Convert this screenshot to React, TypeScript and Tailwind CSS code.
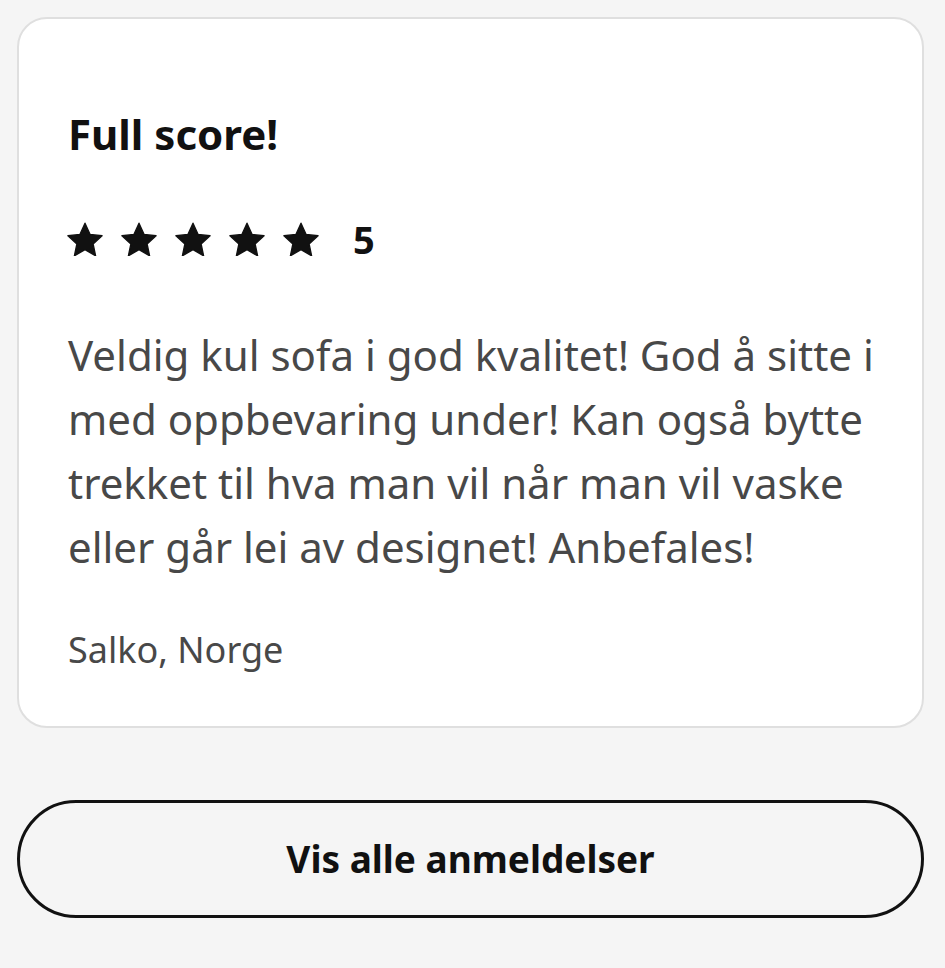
import React from 'react';

const Star: React.FC = () => (
    <svg viewBox="1.2 1.2 21.6 20.5" className="h-[34px] w-[36px]" fill="#111111">
        <path
            d="M12 1.9l3.1 6.8 7.2.8-5.4 4.9 1.5 7.2L12 17.9l-6.4 3.7 1.5-7.2-5.4-4.9 7.2-.8z"
            stroke="#111111"
            strokeWidth="0.8"
            strokeLinejoin="round"
        />
    </svg>
);

export default function App() {
    return (
        <div className="min-h-[968px] bg-[#f5f5f5] pl-[17px] pr-[21px] pt-[17px] font-['Noto_Sans',sans-serif]">
            <div className="rounded-[30px] border-2 border-[#dfdfdf] bg-white pl-[49px] pr-[36px] pt-[87px] pb-[52px]">
                <h2 className="text-[42px] leading-[56px] font-bold text-[#111111]">Full score!</h2>
                <div className="mt-[57px] flex items-center">
                    <div className="-ml-[1px] flex gap-[18px]">
                        <Star />
                        <Star />
                        <Star />
                        <Star />
                        <Star />
                    </div>
                    <span className="ml-[34px] text-[38px] leading-[40px] font-bold text-[#111111]">5</span>
                </div>
                <p className="mt-[64px] text-[42px] leading-[64px] text-[#484848]">
                    Veldig kul sofa i god kvalitet! God å sitte i med oppbevaring under! Kan også bytte trekket til hva man vil når man vil vaske eller går lei av designet! Anbefales!
                </p>
                <p className="mt-[47px] text-[36px] leading-[48px] text-[#484848]">Salko, Norge</p>
            </div>
            <button className="mt-[72px] flex h-[118px] w-full items-center justify-center rounded-full border-[3px] border-[#111111] text-[37px] font-bold text-[#111111]">
                Vis alle anmeldelser
            </button>
        </div>
    );
}
